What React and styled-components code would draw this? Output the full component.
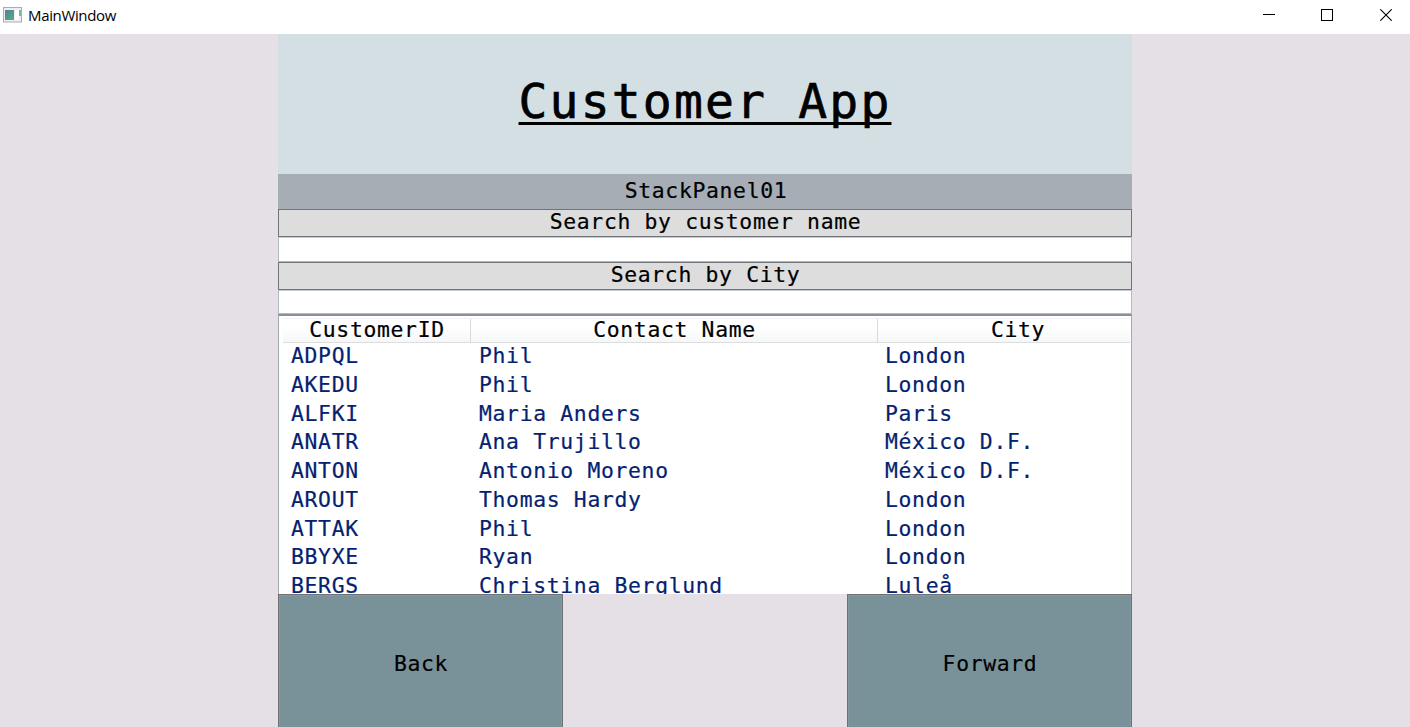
import React from "react";
import styled, { createGlobalStyle } from "styled-components";

const Global = createGlobalStyle`
  * { box-sizing: border-box; }
  body { margin: 0; background: #e5e0e6; overflow: hidden; }
`;

const Window = styled.div`
  display: flex;
  flex-direction: column;
  height: 727px;
  overflow: hidden;
  background: #e5e0e6;
  color: #000;
  font: 21.4px/26px "DejaVu Sans Mono", monospace;
  letter-spacing: 0.67px;
  -webkit-text-stroke: 0.2px currentColor;
`;

const TitleBar = styled.header`
  display: flex;
  align-items: flex-start;
  flex: none;
  height: 34px;
  padding-left: 3px;
  background: #fff;
  -webkit-text-stroke: 0;
`;

const AppIcon = styled.svg`
  width: 19px;
  height: 16px;
  margin-top: 7px;
`;

const WindowTitle = styled.span`
  flex: 1;
  margin-left: 6px;
  padding-top: 5px;
  font: 15px/20px "Open Sans", sans-serif;
  letter-spacing: -0.35px;
`;

const CaptionButton = styled.button`
  display: flex;
  align-items: flex-start;
  justify-content: center;
  width: ${(p) => p.$width}px;
  height: 30px;
  padding: 9px 0 0;
  border: 0;
  background: none;
`;

const Panel = styled.main`
  display: flex;
  flex-direction: column;
  width: 854px;
  height: 693px;
  margin: 0 auto;
`;

const Banner = styled.div`
  flex: none;
  height: 140px;
  padding-top: 37px;
  background: #d4dfe4;
  text-align: center;
`;

const Heading = styled.h1`
  margin: 0;
  font-size: 48px;
  letter-spacing: 2.18px;
  font-weight: 400;
  line-height: 60px;
  text-decoration: underline;
  text-decoration-thickness: 3px;
  text-underline-offset: 4px;
  text-decoration-skip-ink: none;
  -webkit-text-stroke: 0.7px currentColor;
`;

const StackLabel = styled.div`
  flex: none;
  height: 35px;
  padding: 4px 0 0 2px;
  background: #a6adb4;
  text-align: center;
`;

const SearchButton = styled.button`
  flex: none;
  height: 28px;
  padding: 0 0 2px 1px;
  border: 1px solid #70747a;
  background: #ddd;
  color: inherit;
  font: inherit;
  letter-spacing: inherit;
  line-height: 24px;
`;

const SearchBox = styled.input`
  flex: none;
  height: ${(p) => p.$height}px;
  padding: 0 4px;
  border: 1px solid #b4b9c3;
  border-top-color: #c3cad4;
  border-radius: 0;
  background: #fff;
  font: inherit;
  outline: 0;
`;

const ListView = styled.section`
  flex: none;
  height: 280px;
  padding: 2px 1px 0 4px;
  overflow: hidden;
  border: 1px solid #a3a8b2;
  border-top: 2px solid #8b909b;
  border-bottom: 0;
  background: #fff;
`;

const Columns = styled.div`
  display: grid;
  grid-template-columns: 188px 407px 1fr;
`;

const HeaderRow = styled(Columns)`
  height: 25px;
  border-top: 1px solid #f1f1f2;
  border-bottom: 1px solid #dcdddf;
  background: linear-gradient(#fff 35%, #f6f7f8);
  text-align: center;
`;

const HeaderCell = styled.div`
  padding-left: ${(p) => (p.$last ? "28px" : "1px")};
  line-height: 21px;
  border-right: ${(p) => (p.$last ? "0" : "1px solid #d9dadc")};
`;

const Row = styled(Columns)`
  height: 28.75px;
  line-height: 26px;
  color: #042271;
`;

const Cell = styled.div`
  padding-left: 8px;
  white-space: nowrap;
  &:last-child { padding-left: 7px; }
`;

const Footer = styled.footer`
  display: flex;
  justify-content: space-between;
  flex: none;
  height: 137px;
`;

const NavButton = styled.button`
  width: 285px;
  padding: 2px 0 0 1px;
  border: 1px solid #707070;
  box-shadow: inset 0 0 0 1px #829aa0;
  background: #799299;
  color: inherit;
  font: inherit;
  letter-spacing: inherit;
`;

const customers = [
  ["ADPQL", "Phil", "London"],
  ["AKEDU", "Phil", "London"],
  ["ALFKI", "Maria Anders", "Paris"],
  ["ANATR", "Ana Trujillo", "México D.F."],
  ["ANTON", "Antonio Moreno", "México D.F."],
  ["AROUT", "Thomas Hardy", "London"],
  ["ATTAK", "Phil", "London"],
  ["BBYXE", "Ryan", "London"],
  ["BERGS", "Christina Berglund", "Luleå"],
];

const headers = ["CustomerID", "Contact Name", "City"];

export default function App() {
  return (
    <Window>
      <Global />
      <TitleBar>
        <AppIcon viewBox="0 0 19 16">
          <defs>
            <linearGradient id="pane" x1="0" y1="0" x2="1" y2="1">
              <stop offset="0" stopColor="#4c7fa0" />
              <stop offset="1" stopColor="#5cae7c" />
            </linearGradient>
          </defs>
          <rect x="0.5" y="0.5" width="18" height="14.5" fill="#eceef1" stroke="#a9acb4" />
          <rect x="2" y="3" width="9" height="10" fill="url(#pane)" />
          <rect x="12" y="3" width="4" height="10" fill="#fff" />
          <rect x="16" y="3" width="2" height="6" fill="#7cb8a4" />
        </AppIcon>
        <WindowTitle>MainWindow</WindowTitle>
        <CaptionButton $width={46} aria-label="Minimize">
          <svg width="12" height="12"><path d="M0 5.5h12" stroke="#000" /></svg>
        </CaptionButton>
        <CaptionButton $width={70} aria-label="Maximize">
          <svg width="12" height="12"><rect x="0.5" y="0.5" width="11" height="11" fill="none" stroke="#000" /></svg>
        </CaptionButton>
        <CaptionButton $width={48} aria-label="Close">
          <svg width="12" height="12"><path d="M0.3 0.3l11.4 11.4M11.7 0.3L0.3 11.7" stroke="#000" strokeWidth="1.1" /></svg>
        </CaptionButton>
      </TitleBar>
      <Panel>
        <Banner>
          <Heading>Customer App</Heading>
        </Banner>
        <StackLabel>StackPanel01</StackLabel>
        <SearchButton>Search by customer name</SearchButton>
        <SearchBox $height={25} />
        <SearchButton>Search by City</SearchButton>
        <SearchBox $height={24} />
        <ListView>
          <HeaderRow>
            {headers.map((h, i) => (
              <HeaderCell key={h} $last={i === 2}>{h}</HeaderCell>
            ))}
          </HeaderRow>
          {customers.map((c) => (
            <Row key={c[0]}>
              {c.map((v, i) => <Cell key={i}>{v}</Cell>)}
            </Row>
          ))}
        </ListView>
        <Footer>
          <NavButton>Back</NavButton>
          <NavButton>Forward</NavButton>
        </Footer>
      </Panel>
    </Window>
  );
}
